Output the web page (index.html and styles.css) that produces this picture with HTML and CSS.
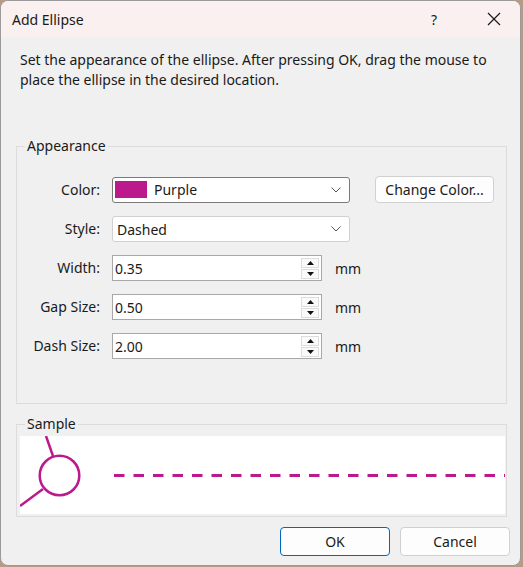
FILE: index.html
```html
<!DOCTYPE html>
<html>
<head>
<meta charset="utf-8">
<link rel="stylesheet" href="styles.css">
</head>
<body>
<div class="window">
  <div class="titlebar">
    <span class="title">Add Ellipse</span>
    <span class="tb-help">?</span>
    <span class="tb-close">
      <svg width="14" height="14" viewBox="0 0 14 14"><path d="M1 1 L13 13 M13 1 L1 13" stroke="#1a1a1a" stroke-width="1.2" fill="none"/></svg>
    </span>
  </div>
  <div class="content">
    <p class="desc">Set the appearance of the ellipse. After pressing OK, drag the mouse to place the ellipse in the desired location.</p>

    <fieldset class="group appearance">
      <legend>Appearance</legend>
      <div class="form">
        <label class="lbl">Color:</label>
        <div class="combo combo-focus">
          <span class="swatch"></span>
          <span class="combo-text">Purple</span>
          <svg class="chev" width="10" height="6" viewBox="0 0 10 6"><path d="M0.5 0.5 L5 5 L9.5 0.5" stroke="#555" stroke-width="1" fill="none"/></svg>
        </div>
        <button class="btn change">Change Color...</button>

        <label class="lbl">Style:</label>
        <div class="combo">
          <span class="combo-text plain">Dashed</span>
          <svg class="chev" width="10" height="6" viewBox="0 0 10 6"><path d="M0.5 0.5 L5 5 L9.5 0.5" stroke="#555" stroke-width="1" fill="none"/></svg>
        </div>
        <span></span>

        <label class="lbl">Width:</label>
        <div class="spinrow">
          <div class="spin">
            <span class="spin-text">0.35</span>
            <div class="spin-btns">
              <span class="sb"><svg width="7" height="4" viewBox="0 0 7 4"><path d="M0 4 L3.5 0 L7 4 Z" fill="#111"/></svg></span>
              <span class="sb"><svg width="7" height="4" viewBox="0 0 7 4"><path d="M0 0 L3.5 4 L7 0 Z" fill="#111"/></svg></span>
            </div>
          </div>
          <span class="unit">mm</span>
        </div>

        <label class="lbl">Gap Size:</label>
        <div class="spinrow">
          <div class="spin">
            <span class="spin-text">0.50</span>
            <div class="spin-btns">
              <span class="sb"><svg width="7" height="4" viewBox="0 0 7 4"><path d="M0 4 L3.5 0 L7 4 Z" fill="#111"/></svg></span>
              <span class="sb"><svg width="7" height="4" viewBox="0 0 7 4"><path d="M0 0 L3.5 4 L7 0 Z" fill="#111"/></svg></span>
            </div>
          </div>
          <span class="unit">mm</span>
        </div>

        <label class="lbl">Dash Size:</label>
        <div class="spinrow">
          <div class="spin">
            <span class="spin-text">2.00</span>
            <div class="spin-btns">
              <span class="sb"><svg width="7" height="4" viewBox="0 0 7 4"><path d="M0 4 L3.5 0 L7 4 Z" fill="#111"/></svg></span>
              <span class="sb"><svg width="7" height="4" viewBox="0 0 7 4"><path d="M0 0 L3.5 4 L7 0 Z" fill="#111"/></svg></span>
            </div>
          </div>
          <span class="unit">mm</span>
        </div>
      </div>
    </fieldset>

    <fieldset class="group sample">
      <legend>Sample</legend>
      <div class="canvas">
        <svg width="485" height="78" viewBox="0 0 485 78">
          <line x1="26" y1="0" x2="33" y2="20" stroke="#bc1a8c" stroke-width="2.5"/>
          <line x1="0" y1="70" x2="23" y2="53" stroke="#bc1a8c" stroke-width="2.5"/>
          <circle cx="39.5" cy="39.5" r="19.8" fill="none" stroke="#bc1a8c" stroke-width="2.5"/>
          <line x1="94" y1="39.5" x2="485" y2="39.5" stroke="#bc1a8c" stroke-width="3" stroke-dasharray="10.5 9"/>
        </svg>
      </div>
    </fieldset>

    <div class="actions">
      <button class="btn ok">OK</button>
      <button class="btn cancel">Cancel</button>
    </div>
  </div>
</div>
</body>
</html>
```

FILE: styles.css
```css
* { box-sizing: border-box; }
html, body { margin: 0; padding: 0; }
body {
  width: 523px;
  height: 567px;
  background: #b79b87;
  font-family: "Noto Sans", "Open Sans", sans-serif;
  font-size: 14px;
  color: #1a1a1a;
  overflow: hidden;
}
.window {
  width: 521px;
  height: 566px;
  background: #f0f0f0;
  border: 1px solid #9a9a9a;
  border-radius: 8px;
  overflow: hidden;
  display: flex;
  flex-direction: column;
}
.titlebar {
  height: 36px;
  flex: none;
  background: #f9f0ef;
  display: flex;
  align-items: center;
  padding-left: 11px;
}
.title { flex: 1; font-size: 14px; }
.tb-help { width: 16px; text-align: center; margin-right: 44px; font-size: 14px; }
.tb-close { width: 16px; margin-right: 18px; display: flex; align-items: center; justify-content: center; }
.content {
  flex: 1;
  display: flex;
  flex-direction: column;
  padding: 0 10px 0 15px;
}
.desc {
  margin: 13px 0 0 4px;
  line-height: 20px;
  width: 480px;
}
.group {
  margin: 0;
  border: 1px solid #dcdcdc;
  padding: 0;
  width: 491px;
}
.group legend {
  margin-left: 8px;
  padding: 0 2px;
  line-height: 20px;
}
.appearance {
  margin-top: 46px;
  height: 268px;
  padding-top: 20px;
}
.form {
  display: grid;
  grid-template-columns: 83px 238px 1fr;
  column-gap: 12px;
  row-gap: 13px;
  align-items: center;
}
.form > * { height: 26px; }
.lbl { text-align: right; line-height: 26px; }
.combo {
  display: flex;
  align-items: center;
  background: #fff;
  border: 1px solid #d0d0d0;
  border-radius: 3px;
  padding: 0 8px 0 2px;
}
.combo-focus { border-color: #7a7a7a; }
.swatch {
  width: 32px;
  height: 17px;
  background: #bc1a8c;
  margin-right: 7px;
}
.combo-text { flex: 1; }
.combo-text.plain { padding-left: 2px; }
.chev { flex: none; }
.btn {
  font-family: inherit;
  font-size: 14px;
  color: #1a1a1a;
  background: #fdfdfd;
  border: 1px solid #d0d0d0;
  border-radius: 4px;
  padding: 0;
}
.change {
  width: 119px;
  height: 27px;
  margin-left: 13px;
}
.spinrow {
  display: flex;
  align-items: center;
  grid-column: span 2;
}
.spin {
  flex: none;
  width: 210px;
  height: 26px;
  background: #fff;
  border: 1px solid #a8a8a8;
  display: flex;
  align-items: center;
  padding: 0 2px 0 2px;
}
.spin-text { flex: 1; }
.spin-btns {
  display: flex;
  flex-direction: column;
  gap: 1px;
  width: 18px;
}
.sb {
  height: 10px;
  background: #fafafa;
  border: 1px solid #dcdcdc;
  display: flex;
  align-items: center;
  justify-content: center;
}
.unit {
  margin-left: 13px;
  width: 40px;
}
.sample {
  margin-top: 10px;
  height: 103px;
  padding: 2px 0 0 0;
}
.canvas {
  width: 485px;
  height: 78px;
  margin-left: 3px;
  background: #fff;
}
.canvas svg { display: block; }
.actions {
  display: flex;
  justify-content: flex-end;
  gap: 10px;
  margin-top: 10px;
}
.ok, .cancel {
  width: 110px;
  height: 29px;
}
.ok { border-color: #0067c0; }
```
